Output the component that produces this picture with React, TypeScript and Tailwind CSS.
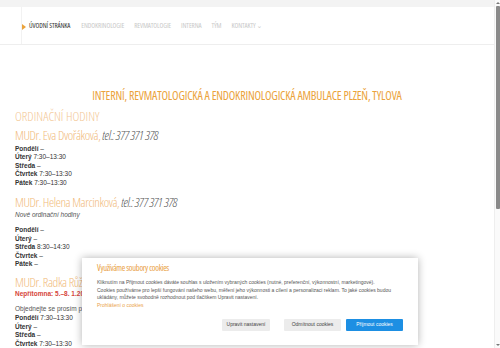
import React from "react";

const narrow = "font-['Open_Sans','DejaVu_Sans_Condensed',sans-serif] font-stretch-[75%]";
const arial = "font-['Liberation_Sans',Arial,sans-serif]";

const navItems = ["ENDOKRINOLOGIE", "REVMATOLOGIE", "INTERNA", "TÝM"];

type Row = { day: string; hours: string };

const Schedule = ({ rows }: { rows: Row[] }) => (
    <div className="text-[6.5px] leading-[8.4px] text-[#333]">
        {rows.map((r) => (
            <div key={r.day}>
                <span className="font-bold">{r.day}</span> {r.hours}
            </div>
        ))}
    </div>
);

const DoctorHeading = ({ name }: { name: string }) => (
    <div className={`${narrow} text-[13px] leading-[14px] tracking-[-0.4px] whitespace-nowrap`}>
        <span className="text-[#f1bb7c] font-light">{name}, </span>
        <span className="italic text-[#555] font-light">tel.: 377 371 378</span>
    </div>
);

const CookieBar = () => (
    <div className={`absolute left-[82px] top-[258px] w-[336px] h-[87px] bg-white shadow-[0_0_8px_rgba(0,0,0,0.3)] pl-[15px] pr-[6px] pt-[5px] ${arial}`}>
        <div className={`${narrow} text-[8.5px] leading-[10px] text-[#e9a043] tracking-[-0.3px]`}>
            Využíváme soubory cookies
        </div>
        <div className="mt-[6px] text-[5px] leading-[7.5px] text-[#555] whitespace-nowrap">
            <div>Kliknutím na Přijmout cookies dáváte souhlas s uložením vybraných cookies (nutné, preferenční, výkonnostní, marketingové).</div>
            <div>Cookies používáme pro lepší fungování našeho webu, měření jeho výkonnosti a cílení a personalizaci reklam. To jaké cookies budou</div>
            <div>ukládány, můžete svobodně rozhodnout pod tlačítkem Upravit nastavení.</div>
            <div className="text-[#eaa24a]">Prohlášení o cookies</div>
        </div>
        <div className="mt-[10px] flex justify-end gap-[5px] pr-[9px] text-[5px]">
            <button className="h-[12px] w-[48px] bg-[#ececec] text-[#444] rounded-[1px]">Upravit nastavení</button>
            <button className="h-[12px] w-[57px] ml-[9px] bg-[#ececec] text-[#444] rounded-[1px]">Odmítnout cookies</button>
            <button className="h-[12px] w-[57px] bg-[#1d8fe3] text-white rounded-[1px]">Přijmout cookies</button>
        </div>
    </div>
);

const App = () => {
    return (
        <div className={`relative w-[500px] h-[348px] overflow-hidden bg-white flex items-start ${arial}`}>
            <div className="w-[494px] shrink-0">
                <div className="h-[7px] bg-[#f3f3f3]" />
                <nav className={`h-[38px] border-b border-[#eeeeee] flex items-center ${narrow} text-[7px] tracking-[-0.1px]`}>
                    <div className="ml-[21px] h-full w-px bg-[#f2f2f2]" />
                    <div className="flex items-center gap-[3px] mt-[2px]">
                        <svg width="4" height="6" viewBox="0 0 4 6">
                            <path d="M0 0 L4 3 L0 6 Z" fill="#eba33b" />
                        </svg>
                        <span className="text-[#333]">ÚVODNÍ STRÁNKA</span>
                    </div>
                    <div className="flex items-center gap-[10px] ml-[11px] mt-[2px] text-[#c9c9c9]">
                        {navItems.map((n) => (
                            <span key={n}>{n}</span>
                        ))}
                        <span>KONTAKTY ⌄</span>
                    </div>
                </nav>
                <div className="px-[15px]">
                    <h1 className={`${narrow} mt-[44px] text-center text-[12px] leading-[14px] tracking-[-0.2px] text-[#eba33b]`}>
                        INTERNÍ, REVMATOLOGICKÁ A ENDOKRINOLOGICKÁ AMBULACE PLZEŇ, TYLOVA
                    </h1>
                    <h2 className={`${narrow} mt-[6px] text-[13px] leading-[14px] font-light text-[#f3c896]`}>
                        ORDINAČNÍ HODINY
                    </h2>
                    <div className="mt-[5px]">
                        <DoctorHeading name="MUDr. Eva Dvořáková" />
                    </div>
                    <div className="mt-[3px]">
                        <Schedule
                            rows={[
                                { day: "Pondělí", hours: "–" },
                                { day: "Úterý", hours: "7:30–13:30" },
                                { day: "Středa", hours: "–" },
                                { day: "Čtvrtek", hours: "7:30–13:30" },
                                { day: "Pátek", hours: "7:30–13:30" },
                            ]}
                        />
                    </div>
                    <div className="mt-[8px]">
                        <DoctorHeading name="MUDr. Helena Marcinková" />
                    </div>
                    <div className="mt-[2px] text-[6.5px] leading-[8.4px] italic text-[#555]">Nové ordinační hodiny</div>
                    <div className="mt-[7px]">
                        <Schedule
                            rows={[
                                { day: "Pondělí", hours: "–" },
                                { day: "Úterý", hours: "–" },
                                { day: "Středa", hours: "8:30–14:30" },
                                { day: "Čtvrtek", hours: "–" },
                                { day: "Pátek", hours: "–" },
                            ]}
                        />
                    </div>
                    <div className="mt-[7px]">
                        <DoctorHeading name="MUDr. Radka Růžičková" />
                    </div>
                    <div className="mt-[1px] text-[6.5px] leading-[8.4px] font-bold text-[#d6453a]">Nepřítomna: 5.–8. 1.2026</div>
                    <div className="mt-[6px] text-[6.5px] leading-[8.4px] text-[#555]">Objednejte se prosím přes telefon.</div>
                    <div className="mt-[1px]">
                        <Schedule
                            rows={[
                                { day: "Pondělí", hours: "7:30–13:30" },
                                { day: "Úterý", hours: "–" },
                                { day: "Středa", hours: "–" },
                                { day: "Čtvrtek", hours: "7:30–13:30" },
                            ]}
                        />
                    </div>
                </div>
            </div>
            <div className="w-[6px] h-full shrink-0 flex flex-col items-center bg-[#fafafa] border-l border-[#eeeeee]">
                <svg width="4" height="4" viewBox="0 0 4 4" className="mt-[1px] shrink-0">
                    <path d="M0 3 L2 1 L4 3 Z" fill="#777" />
                </svg>
                <div className="mt-[1px] w-[4px] h-[203px] shrink-0 bg-[#8a8a8a] rounded-[1px]" />
                <div className="flex-1" />
                <svg width="4" height="4" viewBox="0 0 4 4" className="mb-[1px] shrink-0">
                    <path d="M0 1 L2 3 L4 1 Z" fill="#777" />
                </svg>
            </div>
            <CookieBar />
        </div>
    );
};

export default App;
